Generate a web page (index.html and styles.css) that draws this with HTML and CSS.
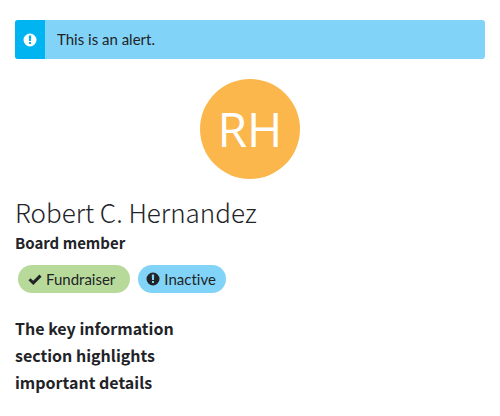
FILE: index.html
```html
<!DOCTYPE html>
<html lang="en">
<head>
<meta charset="utf-8">
<meta name="viewport" content="width=device-width, initial-scale=1">
<title>Robert C. Hernandez</title>
<link rel="stylesheet" href="styles.css">
</head>
<body>
<main class="page">
  <div class="alert" role="alert">
    <span class="alert-icon">
      <svg class="icon" viewBox="0 0 14 14" aria-hidden="true"><path fill="currentColor" fill-rule="evenodd" d="M7 .5a6.500 6.500 0 1 0 0 13a6.500 6.500 0 0 0 0-13zM5.800 2.600h2.400l-.2 5.500h-2zM6 9h2v2H6z"/></svg>
    </span>
    <span class="alert-text">This is an alert.</span>
  </div>
  <div class="avatar" aria-hidden="true">RH</div>
  <h1 class="name">Robert C. Hernandez</h1>
  <p class="role">Board member</p>
  <div class="labels">
    <span class="label label-success">
      <svg class="icon" viewBox="0 0 14 14" aria-hidden="true"><path fill="none" stroke="currentColor" stroke-width="3" d="M1.500 7.200l3.800 3.700L12.500 3.600"/></svg>
      Fundraiser
    </span>
    <span class="label label-info">
      <svg class="icon" viewBox="0 0 14 14" aria-hidden="true"><path fill="currentColor" fill-rule="evenodd" d="M7 .5a6.500 6.500 0 1 0 0 13a6.500 6.500 0 0 0 0-13zM5.800 2.600h2.400l-.2 5.500h-2zM6 9h2v2H6z"/></svg>
      Inactive
    </span>
  </div>
  <h2 class="key-info">The key information section highlights important details</h2>
</main>
</body>
</html>
```
FILE: styles.css
```css
body {
  margin: 0;
  background: #fff;
  color: #212327;
  font: 15px/20px Lato, "Open Sans", sans-serif;
  font-variant-ligatures: none;
}

.page {
  padding: 20px 15px;
}

.alert {
  display: flex;
  background: #81d4f7;
  border-radius: 3px;
  overflow: hidden;
}

.alert-icon {
  display: flex;
  align-items: center;
  justify-content: center;
  width: 30px;
  background: #00b4f1;
  color: #fff;
}

.alert-text {
  padding: 9px 12px 10px;
}

.icon {
  width: 14px;
  height: 14px;
  flex: none;
}

.avatar {
  display: flex;
  align-items: center;
  justify-content: center;
  width: 100px;
  height: 100px;
  margin: 20px auto 12px;
  border-radius: 50%;
  background: #fbb74c;
  color: #fff;
  font: 500 48px/60px "Open Sans", sans-serif;
}

.name {
  margin: 0;
  font: 300 26px/42px "Noto Sans CJK SC", Lato, sans-serif;
}

.role {
  margin: 0;
  font: 700 15px/20px "Noto Sans CJK SC", Lato, sans-serif;
}

.labels {
  display: flex;
  gap: 8px;
  margin: 12px 3px 22px;
}

.label {
  display: flex;
  align-items: center;
  gap: 4px;
  padding: 4px 10px;
  border-radius: 14px;
}

.label-success {
  padding-right: 15px;
  background: #b7da9b;
}

.label-info {
  padding-left: 8px;
  background: #81d4f7;
}

.key-info {
  max-width: 180px;
  margin: 0;
  font: 700 16px/27px "Noto Sans CJK SC", Lato, sans-serif;
}
```
